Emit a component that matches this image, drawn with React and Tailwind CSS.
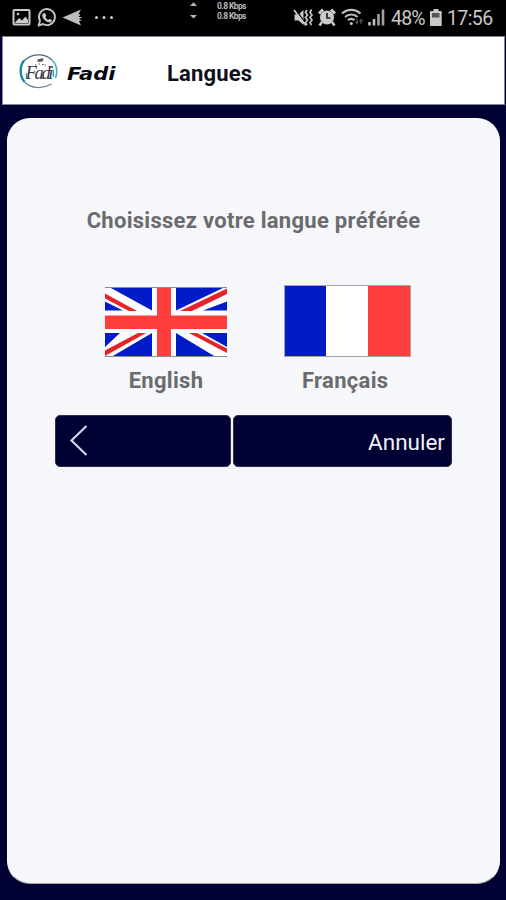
import React from 'react';

function App() {
  return (
    <div className="flex h-[900px] w-[506px] flex-col overflow-hidden bg-[#000033] font-['Roboto',sans-serif]">
      <StatusBar />

      <header className="ml-[2px] flex h-[69px] w-[503px] shrink-0 items-center border border-[#85859a] bg-white">
        <Logo />
        <span className="ml-[8px] w-[100px] origin-left scale-x-[1.17] whitespace-nowrap pt-[6px] font-['DejaVu_Sans',sans-serif] text-[18px] leading-[24px] font-bold italic text-[#080810]">Fadi</span>
        <h1 className="whitespace-nowrap pt-[6px] text-[22px] leading-[28px] font-bold tracking-[0.15px] text-[#10101c]">Langues</h1>
      </header>

      <main className="mt-[13px] ml-[7px] flex h-[766px] w-[493px] shrink-0 flex-col items-center rounded-[23px] border border-[#fefefe] border-b-[#a5a8a8] bg-[#f5f7fb]">
        <p className="mt-[88px] whitespace-nowrap text-[22px] leading-[28px] font-bold tracking-[0.28px] text-[#6b6b6e]">
          Choisissez votre langue préférée
        </p>

        <div className="mt-[50px] flex h-[108px] w-full pl-[96px]">
          <button className="flex w-[124px] flex-col items-center pt-[2px]">
            <FlagUK />
            <Label>English</Label>
          </button>
          <button className="ml-[56px] flex w-[127px] flex-col items-start">
            <FlagFrance />
            <Label className="ml-[18px]">Français</Label>
          </button>
        </div>

        <div className="mt-[22px] flex w-full gap-[2px] pl-[47px]">
          <button className="flex h-[52px] w-[176px] items-center rounded-[5px] border border-[#303045] bg-[#000033] pl-[13px]">
            <svg width="20" height="32" viewBox="0 0 20 32" fill="none" stroke="#d4d4ec" strokeWidth="2.2">
              <path d="M17.5 1 2.500 15.500 17.500 30" />
            </svg>
          </button>
          <button className="flex h-[52px] w-[219px] items-center justify-end rounded-[5px] border border-[#303045] bg-[#000033] pt-[1px] pr-[6px]">
            <span className="text-[22.5px] leading-[28px] text-[#f0f0f5]">Annuler</span>
          </button>
        </div>
      </main>
    </div>
  );
}

const Label = ({ children, className = '' }) => (
  <span className={`mt-[10px] whitespace-nowrap text-[22px] leading-[28px] font-bold tracking-[0.3px] text-[#6b6b6e] ${className}`}>{children}</span>
);

const StatusBar = () => {
  return (
    <div className="flex h-[36px] shrink-0 bg-black text-[#c9c9c9]">
      {/* notifications */}
      <svg width="126" height="36" viewBox="0 0 126 36" fill="none">
        <rect x="13.5" y="10" width="16" height="14.5" rx="1" stroke="#cacaca" strokeWidth="2" />
        <path d="M15 22.5 19 18l3 2.5 3.5-4L28 20v3H15Z" fill="#cacaca" />
        <circle cx="18" cy="14" r="1.3" fill="#cacaca" />
        <path d="M38.5 25.5 40 21a8 8 0 1 1 3 3Z" stroke="#c4c4c4" strokeWidth="1.9" strokeLinejoin="round" />
        <path d="M43.5 13.2 45 13l1.3 2.8-1 1.2c.7 1.4 1.7 2.3 3 2.9l1.2-1.2 2.4 1.4c0 1.7-1.3 2.4-2.7 2.3-3.5-.3-7-4-7-6.8 0-1 .6-2 1.3-2.4Z" fill="#cacaca" />
        <path d="M62.5 17.5 81 9.5 78.5 14l2 .7-2 2.3h4l-3.5 2 3 1.2-3 .8 2 4.5Z" fill="#bdbdbd" />
        <circle cx="96.5" cy="17.5" r="1.5" fill="#c9c9c9" />
        <circle cx="104" cy="17.5" r="1.5" fill="#c9c9c9" />
        <circle cx="111.5" cy="17.5" r="1.5" fill="#c9c9c9" />
      </svg>

      {/* network speed */}
      <svg className="ml-[60px]" width="16" height="36" viewBox="0 0 16 36" fill="#b5b5b5">
        <path d="M4 6 7.5 2.3 11 6ZM4 15h7l-3.5 3.5Z" />
      </svg>
      <div className="ml-[15px] w-[74px] pt-[2px] text-[8.5px] leading-[9.5px] font-bold tracking-[-0.6px] text-[#b8b8b8]">
        <p>0.8 Kbps</p>
        <p>0.8 Kbps</p>
      </div>

      <svg width="97" height="36" viewBox="291 0 97 36" fill="none">
        {/* muted, vibrating */}
        <path d="M294.5 14.5h4l5-4.500v15l-5-4.500h-4Z" fill="#cacaca" />
        <path d="m295.500 9.500 11 15.500" stroke="#000" strokeWidth="1.500" />
        <path d="m294 10 12 15.500" stroke="#cacaca" strokeWidth="1.700" />
        <path d="m307 10-1.500 2.500 2 2.500-2 2.500 2 2.500-2 2.500 1.500 2.500M311.500 9.500l-1.500 3 2 2.500-2 2.500 2 2.500-2 2.500 1.500 2.500" stroke="#c6c6c6" strokeWidth="1.700" />
        {/* alarm */}
        <circle cx="327" cy="17.500" r="7" fill="#cacaca" />
        <path d="m319 13.500 4-4M335 13.500l-4-4" stroke="#cacaca" strokeWidth="3" />
        <path d="m322 22-2.500 3.500M332 22l2.500 3.500" stroke="#cacaca" strokeWidth="2.500" />
        <path d="M327 13v5h3.500" stroke="#222" strokeWidth="1.700" />
        {/* wifi */}
        <path d="M342 13.500a13.500 13.500 0 0 1 18.500 0M345 17a9 9 0 0 1 12.500 0M348 20.200a5 5 0 0 1 6.500 0" stroke="#bdbdbd" strokeWidth="2.200" />
        <circle cx="351.300" cy="23.500" r="1.500" fill="#cacaca" />
        <path d="M357 19v4M355.500 21.500l1.500 2 1.500-2M361 24v-4M359.500 21.500l1.500-2 1.500 2" stroke="#555" strokeWidth="1.200" />
        {/* signal */}
        <path d="M369.500 22v3.500M374 19v6.500" stroke="#bcbcbc" strokeWidth="2.600" />
        <path d="M378.500 14v11.500M383 9.500v16" stroke="#a2a2a2" strokeWidth="2.600" />
      </svg>
      <span className="ml-[3px] w-[39px] whitespace-nowrap pt-[6px] text-[19.5px] leading-[26px] tracking-[-0.8px]">48%</span>
      <svg width="12" height="36" viewBox="0 0 12 36">
        <path d="M3.500 9h5v2H11q.7 0 .7.700v13.600q0 .7-.7.700H.7q-.7 0-.7-.700V11.700Q0 11 .7 11h2.800Z" fill="#c9c9c9" />
        <path d="M2 13h7.500v4.500H2Z" fill="#555" />
      </svg>
      <span className="ml-[5px] whitespace-nowrap pt-[6px] text-[19.5px] leading-[26px] tracking-[-0.6px]">17:56</span>
    </div>
  );
};

const Logo = () => (
  <svg className="ml-[16px] mt-[2px] shrink-0" width="40" height="40" viewBox="0 0 40 40" fill="none">
    <path d="M5 8.500C.5 14 .5 24 5.500 30" stroke="#168aa3" strokeWidth="2.400" />
    <path d="M5 9C12 1.500 25 .5 33 8" stroke="#4c6770" strokeWidth="1.200" />
    <path d="M33 8c5 5 6 11 3.500 18" stroke="#48aebd" strokeWidth="1.600" />
    <path d="M5.500 30c7 7 18 7 27 2" stroke="#5b858c" strokeWidth="1.200" />
    <path d="m18.500 7.500 6-1.500-.8 3.500-5 .5Z" fill="#555a5e" />
    <path d="M16 13h1.500m2-1h1.500m2 .5h1.500m1 .500h1.500" stroke="#555" strokeWidth="1" />
    <text x="6.500" y="27" fill="#34383e" fontFamily="Liberation Serif, serif" fontSize="18.500" fontStyle="italic" textLength="28">Fadi</text>
    <path d="M34.300 17.500V25M7.500 21v5" stroke="#2aa5b6" strokeWidth="1.300" />
  </svg>
);

const FlagUK = () => (
  <svg className="shrink-0" width="124" height="70" viewBox="0 0 124 70" fill="none">
    <path d="M1 0h122v70H1Z" fill="#fff" />
    {/* blue fields */}
    <path d="M7 1h41v22.500ZM1 14.500 19 23.500H1ZM72 1h47L72 23.500ZM123 14.500v9H99ZM1 46h15L1 60ZM48 46v23.500H8ZM72 46v23.500h39ZM98 46h25v14Z" fill="#001bc8" />
    {/* red diagonals */}
    <path d="M1 6.500v5L25 24h8ZM123 1.500V7L88 24H76ZM1 63.500V69L42 46h-8ZM85 46h8l30 15.500V66Z" fill="#e52329" />
    <path d="M53 1h14v68.500H53ZM1 28.500h122v13.500H1Z" fill="#ff3d3d" />
    <path d="M1 .5h122M1 69.500h122" stroke="#898c9b" />
  </svg>
);

const FlagFrance = () => (
  <div className="flex h-[72px] w-[127px] shrink-0 border border-[#a5a5a5]">
    <div className="w-[41px] bg-[#001bc8]" />
    <div className="w-[42px] bg-white" />
    <div className="w-[42px] bg-[#ff3d3d]" />
  </div>
);

export default App;
